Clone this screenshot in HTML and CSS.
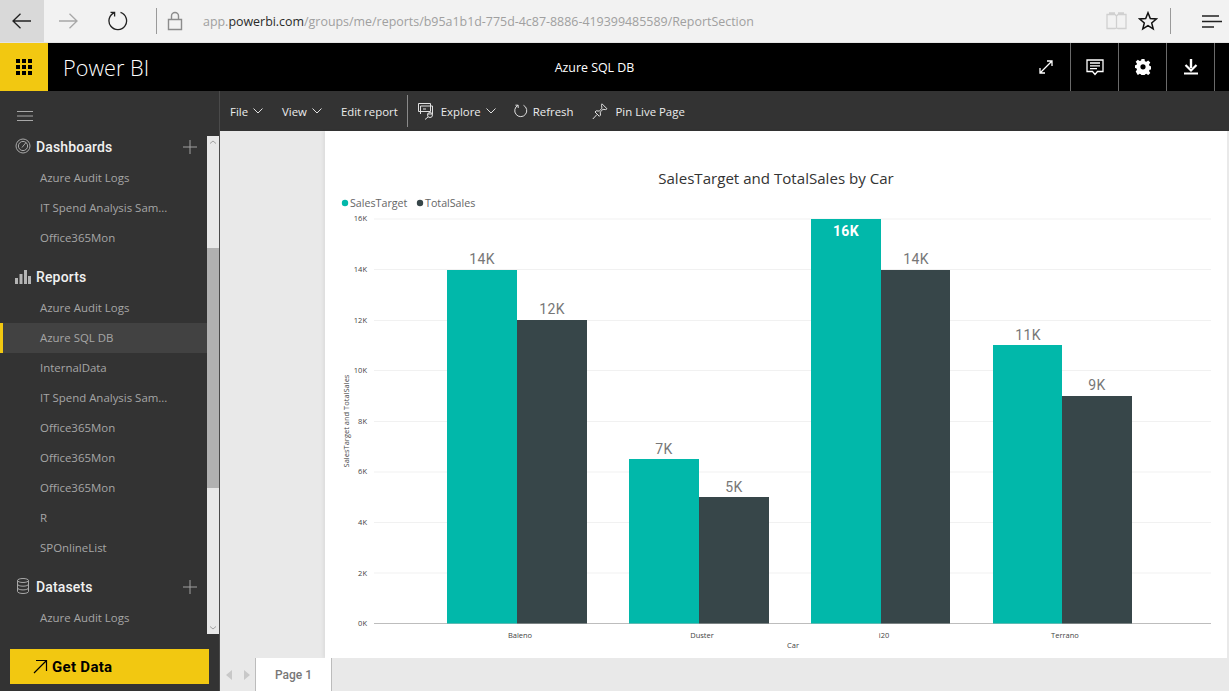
FILE: index.html
```html
<!DOCTYPE html>
<html lang="en">
<head>
<meta charset="utf-8">
<title>Azure SQL DB - Power BI</title>
<link rel="stylesheet" href="styles.css">
</head>
<body>
<div class="browser">
  <div class="nav-btn back"><svg width="20" height="16" viewBox="0 0 20 16"><path d="M19 8H1M8.500 .8 1 8l7.500 7.200" class="ic-dark"/></svg></div>
  <div class="nav-btn fwd"><svg width="20" height="16" viewBox="0 0 20 16"><path d="M1 8h18M11.500 .8 19 8l-7.500 7.200" class="ic-grey"/></svg></div>
  <div class="nav-btn refresh"><svg width="20" height="20" viewBox="0 0 20 20"><path d="M6.500 1.600A8.800 8.800 0 1 0 12.500 1.400M6.600 5.400V1.300H2.500" class="ic-dark"/></svg></div>
  <span class="sep first"></span>
  <svg class="lock" width="16" height="20" viewBox="0 0 16 20"><path d="M1.500 8.500h13v10h-13zM4.500 8.500V5a3.500 3.500 0 0 1 7 0v3.500" class="ic-lock"/></svg>
  <div class="url">app.<b>powerbi.com</b>/groups/me/reports/b95a1b1d-775d-4c87-8886-419399485589/ReportSection</div>
  <svg class="book" width="21" height="18" viewBox="0 0 21 18"><path d="M1 2.500h8l1.500 1.500L12 2.500h8v14h-8l-1.500-.5-1.500.5H1zM10.500 4v12M3 1h6M12 1h6" class="ic-book"/></svg>
  <svg class="star" width="20" height="20" viewBox="0 0 20 20"><path d="M10 1.800l2.300 5.800 6 .4-4.600 3.900 1.500 6-5.200-3.300-5.200 3.300 1.500-6L1.700 8l6-.4z" class="ic-star"/></svg>
  <span class="sep second"></span>
  <svg class="hub" width="21" height="13" viewBox="0 0 21 13"><path d="M1 1h17M1 6.500h20M1 12h12" class="ic-dark"/></svg>
</div>

<header class="appbar">
  <div class="waffle"><svg width="16" height="16" viewBox="0 0 16 16"><path d="M0 0h4v4H0zM6 0h4v4H6zM12 0h4v4h-4zM0 6h4v4H0zM6 6h4v4H6zM12 6h4v4h-4zM0 12h4v4H0zM6 12h4v4H6zM12 12h4v4h-4z" fill="#000"/></svg></div>
  <div class="brand">Power BI</div>
  <div class="doc-title">Azure SQL DB</div>
  <div class="app-expand"><svg width="14" height="14" viewBox="0 0 14 14"><path d="M1 13 13 1M8 1h5v5M1 8v5h5" class="ic-white"/></svg></div>
  <div class="app-btn"><svg width="18" height="17" viewBox="0 0 18 17"><path d="M1 1h16v11.500h-5.500L9 15.500 6.500 12.500H1zM4 4h10M4 6.800h10M4 9.600h7" class="ic-white"/></svg></div>
  <div class="app-btn"><svg width="16" height="16" viewBox="0 0 16 16"><path fill-rule="evenodd" fill="#fff" d="M6.500 0h3l.4 2.200 1.400.6 1.900-1.300 2.100 2.100-1.300 1.900.6 1.400 2.200.4v3l-2.200.4-.6 1.400 1.300 1.900-2.100 2.100-1.900-1.300-1.400.6-.4 2.200h-3l-.4-2.200-1.400-.6-1.900 1.300L.7 12.600 2 10.700l-.6-1.400L-.8 8.900V6.500l2.200-.4.6-1.400L.7 2.800l2.100-2.100 1.900 1.300 1.400-.6zM8 5.200a2.600 2.600 0 1 0 0 5.200 2.600 2.600 0 0 0 0-5.200z"/></svg></div>
  <div class="app-btn"><svg width="14" height="16" viewBox="0 0 14 16"><path d="M7 0v9" stroke="#fff" stroke-width="2.400" fill="none"/><path d="M1.500 6 7 11.500 12.500 6" stroke="#fff" stroke-width="2.200" fill="none"/><path d="M0 14.500h14" stroke="#fff" stroke-width="2" fill="none"/></svg></div>
  <div class="app-end"></div>
</header>

<div class="workspace">
  <aside class="sidebar">
    <div class="burger-row"><svg width="16" height="10" viewBox="0 0 16 10"><path d="M0 .5h16M0 5h16M0 9.500h16" stroke="#a8a8a8" fill="none"/></svg></div>
    <div class="side-middle">
      <nav class="side-list">
        <div class="sec-head">
          <svg class="sec-icon raised" width="16" height="16" viewBox="0 0 16 16"><circle cx="8" cy="8" r="7" class="ic-side"/><circle cx="8" cy="8" r="4.600" class="ic-side"/><path d="M7 9.500 11 4.500" class="ic-side"/></svg>
          <span class="sec-title">Dashboards</span>
          <svg class="plus" width="14" height="14" viewBox="0 0 14 14"><path d="M7 0v14M0 7h14" stroke="#a0a0a0" fill="none"/></svg>
        </div>
        <a class="item">Azure Audit Logs</a>
        <a class="item">IT Spend Analysis Sam...</a>
        <a class="item">Office365Mon</a>
        <div class="sec-head spaced">
          <svg class="sec-icon" width="16" height="14" viewBox="0 0 16 14"><path d="M0 8h3v6H0zM4.500 4h3v10h-3zM9 0h3v14H9zM13 6h3v8h-3z" fill="#b4b4b4"/></svg>
          <span class="sec-title">Reports</span>
        </div>
        <a class="item">Azure Audit Logs</a>
        <a class="item active">Azure SQL DB</a>
        <a class="item">InternalData</a>
        <a class="item">IT Spend Analysis Sam...</a>
        <a class="item">Office365Mon</a>
        <a class="item">Office365Mon</a>
        <a class="item">Office365Mon</a>
        <a class="item">R</a>
        <a class="item">SPOnlineList</a>
        <div class="sec-head spaced">
          <svg class="sec-icon narrow" width="12" height="16" viewBox="0 0 12 16"><ellipse cx="6" cy="2.500" rx="5.500" ry="2" class="ic-side"/><path d="M.5 2.500v11c0 1.100 2.500 2 5.500 2s5.500-.9 5.500-2v-11M.5 6.200c0 1.100 2.500 2 5.500 2s5.500-.9 5.500-2M.5 9.900c0 1.100 2.500 2 5.500 2s5.500-.9 5.500-2" class="ic-side"/></svg>
          <span class="sec-title">Datasets</span>
          <svg class="plus" width="14" height="14" viewBox="0 0 14 14"><path d="M7 0v14M0 7h14" stroke="#a0a0a0" fill="none"/></svg>
        </div>
        <a class="item">Azure Audit Logs</a>
      </nav>
      <div class="scrollbar">
        <svg class="sb-arrow" width="12" height="12" viewBox="0 0 12 12"><path d="M3 7.500 6 5l3 2.500" stroke="#a0a0a0" fill="none"/></svg>
        <div class="sb-top"></div>
        <div class="sb-thumb"></div>
        <div class="sb-bottom"></div>
        <svg class="sb-arrow" width="12" height="12" viewBox="0 0 12 12"><path d="M3 4.500 6 7l3-2.500" stroke="#a0a0a0" fill="none"/></svg>
      </div>
    </div>
    <div class="side-foot">
      <button class="get-data"><svg width="15" height="15" viewBox="0 0 15 15"><path d="M1 14 13.500 1.500M3 1.500h10.500V12" stroke="#000" stroke-width="1.200" fill="none"/></svg><span>Get Data</span></button>
    </div>
  </aside>

  <main class="main">
    <div class="toolbar">
      <span class="tool file">File<svg class="chev" width="10" height="6" viewBox="0 0 10 6"><path d="M.5.500 5 5 9.500.500"/></svg></span>
      <span class="tool view">View<svg class="chev" width="10" height="6" viewBox="0 0 10 6"><path d="M.5.500 5 5 9.500.500"/></svg></span>
      <span class="tool edit">Edit report</span>
      <span class="tool-sep"></span>
      <span class="tool explore"><svg width="18" height="17" viewBox="0 0 18 17"><path d="M.5.500h12v8H.5zM2.500 3h12v8h-5M2.500 11V3M5 6h3" class="ic-tool"/><circle cx="12" cy="12" r="2.500" class="ic-tool"/><path d="M10 14l-3 2.500" class="ic-tool"/></svg>Explore<svg class="chev" width="10" height="6" viewBox="0 0 10 6"><path d="M.5.500 5 5 9.500.500"/></svg></span>
      <span class="tool refresh-t"><svg width="14" height="14" viewBox="0 0 14 14"><path d="M4 1.300A6 6 0 1 0 9.500 1.300M4.200 4V1.200H1.400" class="ic-tool"/></svg>Refresh</span>
      <span class="tool pin"><svg width="16" height="17" viewBox="0 0 16 17"><path d="M10 .8l5 5-1.500.8-2.500-.3-2.800 2.800.3 3-1.200 1.200L3 9l1.200-1.200 3 .3L10 5.300l-.5-3zM5 11.500.8 16" class="ic-tool"/></svg>Pin Live Page</span>
    </div>
    <div class="canvas">
      <section class="report">
        <svg class="chart" width="902" height="527" viewBox="325 131 902 527">
          <text x="776" y="183.500" class="c-title" text-anchor="middle">SalesTarget and TotalSales by Car</text>
          <circle cx="345" cy="203" r="3.200" class="teal"/>
          <text x="350" y="207" class="c-legend">SalesTarget</text>
          <circle cx="420" cy="203" r="3.200" class="slate"/>
          <text x="425" y="207" class="c-legend">TotalSales</text>

          <g class="grid">
            <path d="M374 219H1211M374 269.500H1211M374 320.500H1211M374 370.500H1211M374 421.500H1211M374 472H1211M374 522.500H1211M374 573H1211"/>
          </g>
          <path d="M374 623.500H1211" class="axis"/>

          <g class="c-tick" text-anchor="end">
            <text x="367" y="221">16K</text>
            <text x="367" y="272">14K</text>
            <text x="367" y="323">12K</text>
            <text x="367" y="373">10K</text>
            <text x="367" y="424">8K</text>
            <text x="367" y="474">6K</text>
            <text x="367" y="525">4K</text>
            <text x="367" y="576">2K</text>
            <text x="367" y="626">0K</text>
          </g>
          <text class="c-tick" text-anchor="middle" transform="translate(349 421) rotate(-90)">SalesTarget and TotalSales</text>

          <rect x="447" y="270" width="70" height="353.500" class="teal"/>
          <rect x="517" y="320" width="70" height="303.500" class="slate"/>
          <rect x="629" y="459" width="70" height="164.500" class="teal"/>
          <rect x="699" y="497" width="70" height="126.500" class="slate"/>
          <rect x="811" y="219" width="70" height="404.500" class="teal"/>
          <rect x="881" y="270" width="69" height="353.500" class="slate"/>
          <rect x="993" y="345" width="69" height="278.500" class="teal"/>
          <rect x="1062" y="396" width="70" height="227.500" class="slate"/>

          <g class="c-data" text-anchor="middle">
            <text x="482" y="264">14K</text>
            <text x="552" y="314">12K</text>
            <text x="664" y="454">7K</text>
            <text x="734" y="492">5K</text>
            <text x="846" y="236" class="c-data-in">16K</text>
            <text x="916" y="264">14K</text>
            <text x="1028" y="340">11K</text>
            <text x="1097" y="390">9K</text>
          </g>
          <g class="c-tick" text-anchor="middle">
            <text x="520" y="638">Baleno</text>
            <text x="702" y="638">Duster</text>
            <text x="884" y="638">i20</text>
            <text x="1065" y="638">Terrano</text>
            <text x="793" y="648">Car</text>
          </g>
        </svg>
      </section>
    </div>
    <div class="tabs">
      <div class="tab-arrows">
        <svg width="7" height="10" viewBox="0 0 7 10"><path d="M6 0v10L0 5z" fill="#c8c8c8"/></svg>
        <svg width="7" height="10" viewBox="0 0 7 10"><path d="M1 0v10l6-5z" fill="#c8c8c8"/></svg>
      </div>
      <div class="tab">Page 1</div>
    </div>
  </main>
</div>
</body>
</html>
```

FILE: styles.css
```css
* { box-sizing: border-box; }
html, body { margin: 0; height: 100%; overflow: hidden; }
body {
  width: 1229px;
  height: 691px;
  display: flex;
  flex-direction: column;
  font-family: "Open Sans", "Liberation Sans", sans-serif;
  background: #333;
}
svg { display: block; flex: none; }

.ic-dark { fill: none; stroke: #222; stroke-width: 1.3; }
.ic-grey { fill: none; stroke: #a8a8a8; stroke-width: 1.3; }
.ic-lock { fill: none; stroke: #8c8c8c; stroke-width: 1.4; }
.ic-book { fill: none; stroke: #d0d0d0; stroke-width: 1.3; }
.ic-star { fill: none; stroke: #111; stroke-width: 1.5; }
.ic-white { fill: none; stroke: #fff; stroke-width: 1.3; }
.ic-side { fill: none; stroke: #a8a8a8; stroke-width: 1; }
.ic-tool { fill: none; stroke: #e0e0e0; stroke-width: 1; }

/* browser chrome */
.browser {
  height: 43px;
  flex: none;
  display: flex;
  align-items: center;
  background: #f2f2f2;
  border-bottom: 1px solid #e4e4e4;
}
.nav-btn { height: 42px; display: flex; align-items: center; justify-content: center; }
.nav-btn.back { width: 44px; background: #d9d9d9; }
.nav-btn.fwd { width: 48px; }
.nav-btn.refresh { width: 52px; }
.sep { width: 1px; height: 26px; background: #9a9a9a; }
.sep.first { margin-left: 12px; }
.lock { margin-left: 10px; }
.url {
  margin-left: 20px;
  font-size: 12.430px;
  color: #a0a0a0;
  white-space: nowrap;
  flex: 1;
}
.url b { font-weight: 400; color: #2a2a2a; }
.book { margin-right: 11px; }
.star { margin-right: 12px; }
.sep.second { margin-right: 30px; }
.hub { margin-right: 7px; }

/* app bar */
.appbar {
  height: 48px;
  flex: none;
  display: flex;
  align-items: center;
  background: #000;
  color: #fff;
}
.waffle {
  width: 48px;
  height: 48px;
  background: #f2c811;
  display: flex;
  align-items: center;
  justify-content: center;
}
.brand { margin-left: 15px; width: 387px; font-size: 21.700px; font-weight: 300; }
.doc-title { width: 157px; text-align: center; font-size: 12.400px; margin-left: 66px; }
.app-expand { margin-left: 366px; width: 28px; }
.app-btn {
  width: 48px;
  height: 48px;
  display: flex;
  align-items: center;
  justify-content: center;
  border-left: 1px solid #6a6a6a;
}
.app-expand + .app-btn { margin-left: 3px; }
.app-end { flex: 1; height: 48px; border-left: 1px solid #6a6a6a; }

/* workspace */
.workspace { flex: 1; min-height: 0; display: flex; }

.sidebar {
  width: 220px;
  flex: none;
  display: flex;
  flex-direction: column;
  background: #333;
  border-right: 1px solid #4a4a4a;
}
.burger-row { height: 42px; flex: none; padding: 20px 0 0 17px; }
.side-middle { flex: 1; min-height: 0; display: flex; }
.side-list { flex: 1; min-width: 0; overflow: hidden; }
.sec-head {
  height: 30px;
  display: flex;
  align-items: center;
  padding-left: 15px;
  padding-bottom: 2px;
  color: #fff;
}
.sec-head.spaced { margin-top: 10px; }
.sec-icon { margin-right: 5px; }
.sec-icon.raised { margin-bottom: 2px; }
.sec-icon.narrow { margin-left: 2px; margin-right: 7px; margin-bottom: 2px; }
.sec-title {
  font-family: Roboto, "Open Sans", sans-serif;
  font-size: 14px;
  font-weight: 500;
  letter-spacing: .15px;
  color: #f0f0f0;
}
.plus { margin-left: auto; margin-right: 10px; }
.item {
  display: block;
  height: 30px;
  line-height: 30px;
  padding-left: 40px;
  font-size: 11.450px;
  color: #a6a6a6;
  white-space: nowrap;
}
.item.active {
  background: #424242;
  border-left: 3px solid #f2c811;
  padding-left: 37px;
}
.scrollbar {
  width: 12px;
  flex: none;
  margin-top: 3px;
  display: flex;
  flex-direction: column;
  background: #e8e8e8;
}
.sb-arrow { flex: none; }
.sb-top { height: 100px; }
.sb-thumb { height: 240px; background: #b1b1b1; }
.sb-bottom { flex: 1; }

.side-foot { height: 57px; flex: none; padding: 15px 10px 7px; }
.get-data {
  width: 199px;
  height: 35px;
  border: 0;
  padding: 0 0 0 23px;
  background: #f2c811;
  color: #000;
  display: flex;
  align-items: center;
  gap: 4px;
  font-family: Roboto, "Open Sans", sans-serif;
  font-size: 15px;
  font-weight: 700;
  letter-spacing: .3px;
}

/* main */
.main { flex: 1; min-width: 0; display: flex; flex-direction: column; }
.toolbar {
  height: 40px;
  flex: none;
  display: flex;
  align-items: center;
  background: #333;
  color: #ececec;
  font-size: 11.400px;
}
.tool { display: flex; align-items: center; white-space: nowrap; }
.chev { fill: none; stroke: #e0e0e0; stroke-width: 1; margin-left: 5px; }
.tool.file { margin-left: 10px; }
.tool.view { margin-left: 19px; }
.tool.edit { margin-left: 19px; }
.tool-sep { width: 1px; height: 32px; background: #8a8a8a; margin-left: 9px; }
.tool.explore { margin-left: 10px; }
.tool.explore > svg:first-child { margin-right: 5px; }
.tool.refresh-t { margin-left: 18px; }
.tool.refresh-t svg { margin-right: 5px; }
.tool.pin { margin-left: 19px; }
.tool.pin svg { margin-right: 7px; }

.canvas {
  flex: 1;
  min-height: 0;
  display: flex;
  background: #e9e9e9;
  padding-left: 105px;
  padding-right: 2px;
}
.report { flex: 1; background: #fff; box-shadow: -2px 0 3px rgba(0,0,0,.05); }

.chart text { font-family: "Open Sans", "Liberation Sans", sans-serif; }
.teal { fill: #01b8aa; }
.slate { fill: #374649; }
.c-title { font-size: 15.100px; fill: #333; }
.c-legend { font-size: 10.700px; fill: #666; }
.grid path { stroke: #f1f1f1; fill: none; }
.axis { stroke: #bdbdbd; fill: none; }
.c-tick { font-size: 7.500px; fill: #444; }
.c-tick text { font-size: 7.500px; fill: #444; }
.chart .c-data text { font-family: Roboto, sans-serif; font-size: 14px; fill: #777; letter-spacing: .4px; }
.chart .c-data .c-data-in { fill: #fff; font-weight: 700; }

.tabs {
  height: 33px;
  flex: none;
  display: flex;
  background: #e9e9e9;
}
.tab-arrows {
  width: 35px;
  display: flex;
  align-items: center;
  justify-content: center;
  gap: 10px;
}
.tab {
  width: 77px;
  background: #fff;
  border-left: 1px solid #bcbcbc;
  border-right: 1px solid #bcbcbc;
  display: flex;
  align-items: center;
  justify-content: center;
  font-family: Roboto, sans-serif;
  font-size: 12px;
  font-weight: 500;
  color: #777;
}
```
